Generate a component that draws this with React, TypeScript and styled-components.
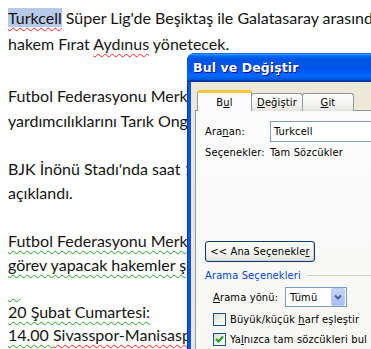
import styled, { createGlobalStyle } from 'styled-components'

const GlobalStyle = createGlobalStyle`
  html, body {
    margin: 0;
    padding: 0;
    background: #ffffff;
    overflow: hidden;
  }
`

const Page = styled.div`
  position: relative;
  width: 371px;
  height: 349px;
  overflow: hidden;
  background: #ffffff;
`

const Doc = styled.div`
  padding: 5px 0 0 8px;
  font-family: Lato, 'Open Sans', sans-serif;
  font-size: 16px;
  color: #141414;
`

// line boxes of the document; heights follow the page's own spacing
const Line = styled.div<{ $h: number }>`
  white-space: nowrap;
  height: ${({ $h }) => $h}px;
  line-height: ${({ $h }) => $h}px;
`

const Selected = styled.span`
  background: #b7c9e9;
`

const Squiggle = styled.span<{ $tone: 'red' | 'green' }>`
  text-decoration-line: underline;
  text-decoration-style: wavy;
  text-decoration-color: ${({ $tone }) => ($tone === 'red' ? '#ff2020' : '#1ea51e')};
  text-decoration-thickness: 1px;
  text-underline-offset: 3px;
`

/* ---- dialog ---- */

const Dialog = styled.div`
  position: absolute;
  left: 187px;
  top: 53px;
  width: 420px;
  height: 330px;
  display: flex;
  flex-direction: column;
  background: #0a55e4;
  box-shadow: inset 1px 0 #0831d9;
  border-radius: 8px 8px 0 0;
  overflow: hidden;
  font-family: 'DejaVu Sans Condensed', 'Liberation Sans', sans-serif;
  font-size: 11px;
  letter-spacing: 0.15px;
  color: #000;
`

const TitleBar = styled.div`
  height: 29px;
  flex: none;
  display: flex;
  align-items: center;
  padding-left: 6px;
  background: linear-gradient(
    to bottom,
    #0058ee 0%,
    #3593ff 4%,
    #288eff 6%,
    #127dff 8%,
    #036ffc 10%,
    #0262ee 14%,
    #0057e5 20%,
    #0054e3 24%,
    #0055eb 56%,
    #005bf5 66%,
    #026afe 76%,
    #0062ef 86%,
    #0052d6 92%,
    #0040ab 94%,
    #003092 100%
  );
  color: #ffffff;
  font-family: 'DejaVu Sans', 'Liberation Sans', sans-serif;
  font-weight: bold;
  font-size: 12.5px;
  letter-spacing: 0.1px;
  text-shadow: 1px 1px #0f1089;
`

const Body = styled.div`
  flex: 1;
  margin: 0 4px;
  background: #ece9d8;
  padding: 8px 0 0 4px;
`

const TabStrip = styled.div`
  display: flex;
  align-items: flex-end;
  height: 21px;
  padding-left: 2px;
`

const Tab = styled.div<{ $active?: boolean }>`
  position: relative;
  z-index: ${({ $active }) => ($active ? 1 : 0)};
  width: ${({ $active }) => ($active ? 55 : 52)}px;
  height: ${({ $active }) => ($active ? 21 : 18)}px;
  box-sizing: border-box;
  margin-left: ${({ $active }) => ($active ? 0 : -1)}px;
  border: 1px solid #919b9c;
  border-bottom: none;
  border-top: ${({ $active }) => ($active ? '3px solid #ffc83c' : '1px solid #919b9c')};
  border-radius: 3px 3px 0 0;
  background: ${({ $active }) =>
    $active ? '#fcfcfe' : 'linear-gradient(to bottom, #ffffff 0%, #f3f3ef 60%, #e4e3dc 100%)'};
  display: flex;
  justify-content: center;
  padding-top: ${({ $active }) => ($active ? 3 : 2)}px;
  &:first-child {
    margin-left: 0;
  }
`

const Panel = styled.div`
  margin-top: -1px;
  height: 320px;
  border: 1px solid #919b9c;
  background: linear-gradient(to bottom, #fcfcfe 0%, #f6f5f0 100%);
  padding: 10px 0 0 9px;
`

const FieldRow = styled.div`
  display: flex;
  align-items: center;
  min-height: 13px;
`

const FieldLabel = styled.div<{ $width: number }>`
  width: ${({ $width }) => $width}px;
  flex: none;
  white-space: nowrap;
`

const TextBox = styled.div`
  width: 220px;
  height: 21px;
  box-sizing: border-box;
  border: 1px solid #7f9db9;
  background: #ffffff;
  display: flex;
  align-items: center;
  padding-left: 3px;
`

const InfoRow = styled(FieldRow)`
  margin-top: 4px;
  line-height: 13px;
`

const Button = styled.div`
  margin-top: 82px;
  width: 110px;
  height: 21px;
  box-sizing: border-box;
  border: 1px solid #003c74;
  border-radius: 3px;
  background: linear-gradient(to bottom, #ffffff 0%, #f4f4f0 60%, #e3e2da 100%);
  box-shadow: inset -1px -1px #d6d0c5;
  display: flex;
  align-items: center;
  justify-content: center;
`

const GroupHeader = styled.div`
  margin-top: 7px;
  display: flex;
  align-items: center;
  gap: 6px;
  line-height: 13px;
  color: #0046d5;
  &::after {
    content: '';
    flex: 1;
    height: 1px;
    background: #d0d0bf;
  }
`

const Options = styled.div`
  padding-left: 8px;
  display: flex;
  flex-direction: column;
`

const SelectRow = styled(FieldRow)`
  margin-top: 5px;
`

const SelectBox = styled.div`
  width: 62px;
  height: 20px;
  box-sizing: border-box;
  border: 1px solid #7f9db9;
  background: #ffffff;
  display: flex;
  align-items: center;
  justify-content: space-between;
  padding: 1px;
  padding-left: 4px;
`

const DropButton = styled.div`
  width: 12px;
  height: 16px;
  border-radius: 2px;
  background: linear-gradient(to bottom, #c6d6fb 0%, #b4c8f7 50%, #a8bdf3 100%);
  border: 1px solid #b9cbf3;
  display: flex;
  align-items: center;
  justify-content: center;
`

const CheckRow = styled.div<{ $gap: number }>`
  margin-top: ${({ $gap }) => $gap}px;
  display: flex;
  align-items: center;
  gap: 4px;
  line-height: 13px;
`

const CheckBox = styled.div`
  width: 13px;
  height: 13px;
  box-sizing: border-box;
  border: 1px solid #1c5180;
  background: linear-gradient(135deg, #dcdcd7 0%, #f4f4f1 60%, #ffffff 100%);
  display: flex;
  align-items: center;
  justify-content: center;
`

function Check() {
  return (
    <svg width="9" height="9" viewBox="0 0 9 9">
      <path d="M1 4 L3.5 6.5 L8 1.5" fill="none" stroke="#21a121" strokeWidth="2.2" />
    </svg>
  )
}

function Chevron() {
  return (
    <svg width="8" height="6" viewBox="0 0 8 6">
      <path d="M1 1.5 L4 4.5 L7 1.5" fill="none" stroke="#4d6185" strokeWidth="2" />
    </svg>
  )
}

export default function App() {
  return (
    <Page>
      <GlobalStyle />
      <Doc>
        <Line $h={26}>
          <Squiggle $tone="red">
            <Selected>Turkcell</Selected>
          </Squiggle>{' '}
          Süper Lig'de Beşiktaş ile Galatasaray arasınd
        </Line>
        <Line $h={26}>
          hakem Fırat <Squiggle $tone="red">Aydınus</Squiggle> yönetecek.
        </Line>
        <Line $h={25.5} />
        <Line $h={25.5}>Futbol Federasyonu Merk</Line>
        <Line $h={25}>yardımcılıklarını Tarık Ong</Line>
        <Line $h={23.5} />
        <Line $h={24}>BJK İnönü Stadı'nda saat 1</Line>
        <Line $h={24.5}>açıklandı.</Line>
        <Line $h={24} />
        <Line $h={24}>
          <Squiggle $tone="green">Futbol Federasyonu Merk</Squiggle>
        </Line>
        <Line $h={23.5}>
          <Squiggle $tone="green">görev yapacak hakemler ş</Squiggle>
        </Line>
        <Line $h={23}>
          <Squiggle $tone="green">{'\u00a0\u00a0\u00a0'}</Squiggle>
        </Line>
        <Line $h={23.5}>
          <Squiggle $tone="green">20 Şubat Cumartesi:</Squiggle>
        </Line>
        <Line $h={24}>
          <Squiggle $tone="green">14.00 </Squiggle>
          <Squiggle $tone="red">Sivasspor-Manisasp</Squiggle>
        </Line>
      </Doc>

      <Dialog>
        <TitleBar>Bul ve Değiştir</TitleBar>
        <Body>
          <TabStrip>
            <Tab $active>
              <span>
                B<u>u</u>l
              </span>
            </Tab>
            <Tab>
              <span>
                <u>D</u>eğiştir
              </span>
            </Tab>
            <Tab>
              <span>
                <u>G</u>it
              </span>
            </Tab>
          </TabStrip>
          <Panel>
            <FieldRow>
              <FieldLabel $width={65}>
                Ara<u>n</u>an:
              </FieldLabel>
              <TextBox>Turkcell</TextBox>
            </FieldRow>
            <InfoRow>
              <FieldLabel $width={65}>Seçenekler:</FieldLabel>
              <span>Tam Sözcükler</span>
            </InfoRow>
            <Button>
              <span>
                &lt;&lt; Ana Seçenekle<u>r</u>
              </span>
            </Button>
            <GroupHeader>Arama Seçenekleri</GroupHeader>
            <Options>
              <SelectRow>
                <FieldLabel $width={72}>
                  <u>A</u>rama yönü:
                </FieldLabel>
                <SelectBox>
                  <span>Tümü</span>
                  <DropButton>
                    <Chevron />
                  </DropButton>
                </SelectBox>
              </SelectRow>
              <CheckRow $gap={6}>
                <CheckBox />
                <span>
                  Büyük/küçük <u>h</u>arf eşleştir
                </span>
              </CheckRow>
              <CheckRow $gap={7}>
                <CheckBox>
                  <Check />
                </CheckBox>
                <span>
                  Ya<u>l</u>nızca tam sözcükleri bul
                </span>
              </CheckRow>
            </Options>
          </Panel>
        </Body>
      </Dialog>
    </Page>
  )
}
